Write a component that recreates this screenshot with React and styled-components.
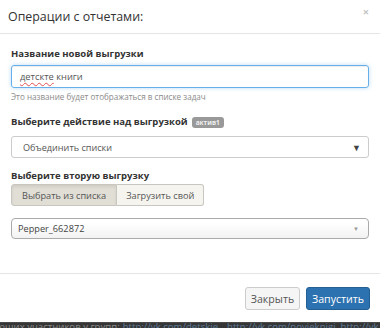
import React from 'react';
import styled, { createGlobalStyle } from 'styled-components';

const GlobalStyle = createGlobalStyle`
  html, body {
    margin: 0;
    padding: 0;
    background: #333;
    overflow: hidden;
  }
  body {
    font-family: "Open Sans", "Noto Sans", sans-serif;
    color: #333;
  }
`;

const Modal = styled.div`
  width: 380px;
  background: #fff;
  display: flex;
  flex-direction: column;
`;

const Header = styled.div`
  height: 33px;
  border-bottom: 1px solid #e5e5e5;
  display: flex;
  align-items: center;
  justify-content: space-between;
  padding: 0 8px;
`;

const Title = styled.h4`
  margin: 0;
  font-size: 12.4px;
  font-weight: 400;
  color: #333;
`;

const Close = styled.span`
  align-self: flex-start;
  margin-top: 6px;
  margin-right: 3px;
  font-size: 11px;
  font-weight: 700;
  color: #c4c4c4;
  line-height: 12px;
`;

const Body = styled.div`
  padding: 12px 11px 34px;
  display: flex;
  flex-direction: column;
`;

const Label = styled.label`
  display: flex;
  align-items: center;
  gap: 4px;
  font-size: 9.5px;
  font-weight: 700;
  line-height: 16px;
  color: #333;
  margin-top: ${(p) => p.$top || 0}px;
  margin-bottom: ${(p) => p.$bottom || 0}px;
`;

const Badge = styled.span`
  background: #999;
  color: #eee;
  font-size: 6.5px;
  font-weight: 700;
  line-height: 11px;
  padding: 0 4px;
  border-radius: 3px;
`;

const Input = styled.div`
  height: 23px;
  box-sizing: border-box;
  border: 1px solid #66afe9;
  border-radius: 3px;
  box-shadow: inset 0 1px 1px rgba(0, 0, 0, 0.075), 0 0 4px rgba(102, 175, 233, 0.45);
  display: flex;
  align-items: center;
  padding: 0 8px;
  font-size: 9.3px;
  color: #555;
`;

const Misspelled = styled.span`
  text-decoration: underline wavy #e05050;
  text-decoration-thickness: 1px;
  text-underline-offset: 2px;
`;

const Help = styled.div`
  margin-top: 3px;
  font-size: 8.1px;
  line-height: 12px;
  color: #8a8a8a;
`;

const Select = styled.div`
  height: 22px;
  box-sizing: border-box;
  border: 1px solid #ccc;
  border-radius: 3px;
  display: flex;
  align-items: center;
  justify-content: space-between;
  padding: 0 7px 0 11px;
  font-size: 9.1px;
  color: #555;
  background: #fff;
`;

const Arrow = styled.span`
  font-size: ${(p) => p.$size || 9}px;
  color: ${(p) => p.$color || '#444'};
`;

const Group = styled.div`
  display: flex;
  align-self: flex-start;
`;

const GroupButton = styled.div`
  height: 22px;
  box-sizing: border-box;
  display: flex;
  align-items: center;
  padding: 0 ${(p) => p.$pad}px;
  font-size: 9.2px;
  color: #555;
  border: 1px solid #c8c6bf;
  background: ${(p) => (p.$active ? '#e1ded6' : '#f5f4ef')};
  box-shadow: ${(p) => (p.$active ? 'inset 0 2px 3px rgba(0,0,0,0.08)' : 'none')};
  &:first-child {
    border-radius: 3px 0 0 3px;
  }
  &:last-child {
    border-radius: 0 3px 3px 0;
    border-left: none;
  }
`;

const Chosen = styled.div`
  margin-top: 12px;
  height: 21px;
  box-sizing: border-box;
  border: 1px solid #aaa;
  border-radius: 4px;
  background: linear-gradient(#fff 20%, #f2f2f2 100%);
  display: flex;
  align-items: center;
  justify-content: space-between;
  padding: 0 9px 0 6px;
  font-size: 9.2px;
  color: #444;
`;

const Footer = styled.div`
  border-top: 1px solid #e5e5e5;
  padding: 13px 10px 12px;
  display: flex;
  justify-content: flex-end;
  gap: 6px;
`;

const Button = styled.div`
  height: 23px;
  box-sizing: border-box;
  display: flex;
  align-items: center;
  justify-content: center;
  width: ${(p) => p.$width}px;
  font-size: 10.6px;
  border-radius: 3px;
  border: 1px solid ${(p) => (p.$primary ? '#245f94' : '#ccc')};
  background: ${(p) => (p.$primary ? '#2d72b0' : '#f5f5f5')};
  color: ${(p) => (p.$primary ? '#fff' : '#555')};
`;

const Backdrop = styled.div`
  display: flex;
  height: 8px;
  white-space: nowrap;
  font-size: 9.6px;
  line-height: 8px;
  color: #8a8a8a;
  background: #363636;
  border-top: 1px solid #4a4a4a;
  margin-left: -3px;
`;

const Link = styled.span`
  color: #5d7a96;
  text-decoration: underline;
  margin-left: ${(p) => p.$gap}px;
`;

export default function App() {
  return (
    <>
      <GlobalStyle />
      <Modal>
        <Header>
          <Title>Операции с отчетами:</Title>
          <Close>×</Close>
        </Header>
        <Body>
          <Label $bottom={3}>Название новой выгрузки</Label>
          <Input>
            <span>
              <Misspelled>детскте</Misspelled> книги
            </span>
          </Input>
          <Help>Это название будет отображаться в списке задач</Help>

          <Label $top={11} $bottom={6}>
            Выберите действие над выгрузкой <Badge>актив1</Badge>
          </Label>
          <Select>
            <span>Объединить списки</span>
            <Arrow>▼</Arrow>
          </Select>

          <Label $top={10}>Выберите вторую выгрузку</Label>
          <Group>
            <GroupButton $active $pad={10}>Выбрать из списка</GroupButton>
            <GroupButton $pad={9}>Загрузить свой</GroupButton>
          </Group>

          <Chosen>
            <span>Pepper_662872</span>
            <Arrow $size={6} $color="#999">▼</Arrow>
          </Chosen>
        </Body>
        <Footer>
          <Button $width={55}>Закрыть</Button>
          <Button $primary $width={64}>Запустить</Button>
        </Footer>
      </Modal>
      <Backdrop>
        <span>ющих участников у групп:</span>
        <Link $gap={3}>http://vk.com/detskie</Link>
        <Link $gap={9}>http://vk.com/novieknigi</Link>
        <Link $gap={5}>http://vk.com</Link>
      </Backdrop>
    </>
  );
}
